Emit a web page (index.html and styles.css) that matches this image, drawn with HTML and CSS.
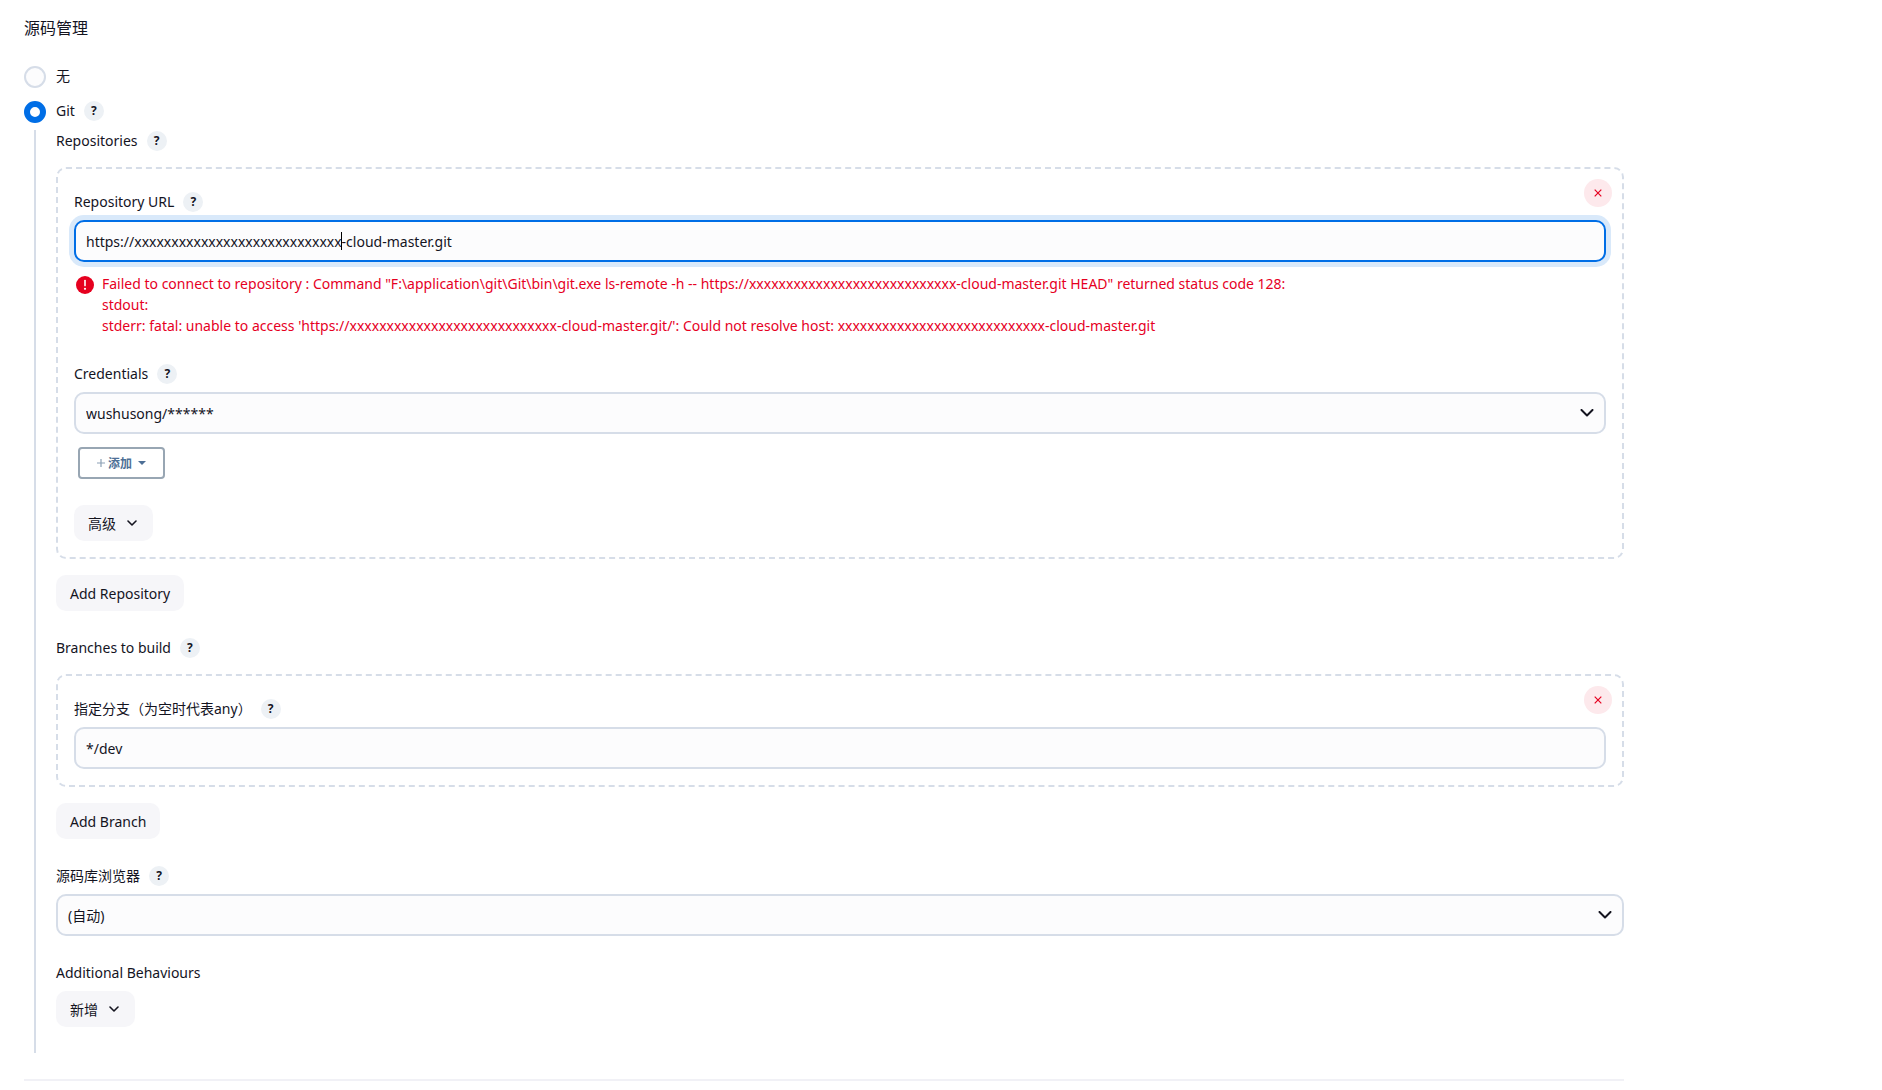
FILE: index.html
```
<!DOCTYPE html>
<html lang="zh-CN">
<head>
  <meta charset="UTF-8">
  <meta name="viewport" content="width=device-width, initial-scale=1.0">
  <title>源码管理</title>
  <link rel="stylesheet" href="styles.css">
</head>
<body>
  <form class="container">
    <h2 class="section-title">源码管理</h2>

    <div class="radio-row">
      <input type="radio" class="radio" id="scmNone" name="scm">
      <label for="scmNone">无</label>
    </div>
    <div class="radio-row">
      <input type="radio" class="radio" id="scmGit" name="scm" checked>
      <label for="scmGit">Git</label>
      <button type="button" class="help">?</button>
    </div>

    <div class="nested">
      <div class="label-row wide">
        <span>Repositories</span>
        <button type="button" class="help">?</button>
      </div>
      <div class="chunk">
        <button type="button" class="delete" aria-label="Delete">
          <svg width="8" height="8" viewBox="0 0 8 8"><path d="M0.7 0.7L7.3 7.3M7.3 0.7L0.7 7.3" stroke="currentColor" stroke-width="1.2" fill="none"/></svg>
        </button>
        <div class="field">
          <div class="label-row">
            <label for="repoUrl">Repository URL</label>
            <button type="button" class="help">?</button>
          </div>
          <div class="input-wrap">
            <input type="text" class="input" id="repoUrl" value="https://xxxxxxxxxxxxxxxxxxxxxxxxxxxx-cloud-master.git" autofocus spellcheck="false">
            <span class="text-caret"></span>
          </div>
          <div class="error">
            <svg class="error-icon" width="18" height="18" viewBox="0 0 18 18"><circle cx="9" cy="9" r="9" fill="#e6001f"/><path d="M9 4.6V9.6" stroke="#fff" stroke-width="1.6" stroke-linecap="round"/><circle cx="9" cy="12.8" r="1.1" fill="#fff"/></svg>
            <div>Failed to connect to repository : Command "F:\application\git\Git\bin\git.exe ls-remote -h -- https://xxxxxxxxxxxxxxxxxxxxxxxxxxxx-cloud-master.git HEAD" returned status code 128:<br>stdout:<br>stderr: fatal: unable to access 'https://xxxxxxxxxxxxxxxxxxxxxxxxxxxx-cloud-master.git/': Could not resolve host: xxxxxxxxxxxxxxxxxxxxxxxxxxxx-cloud-master.git</div>
          </div>
        </div>
        <div class="field">
          <div class="label-row">
            <label for="credentials">Credentials</label>
            <button type="button" class="help">?</button>
          </div>
          <select class="input select" id="credentials">
            <option>wushusong/******</option>
          </select>
          <button type="button" class="add-button">
            <svg width="8" height="8" viewBox="0 0 8 8"><path d="M4 0V8M0 4H8" stroke="#8ba0b5" stroke-width="1.2"/></svg>
            添加
            <svg class="caret" width="8" height="4" viewBox="0 0 8 4"><path d="M0 0H8L4 4Z" fill="currentColor"/></svg>
          </button>
        </div>
        <button type="button" class="button">高级
          <svg class="chevron" width="10" height="6" viewBox="0 0 10 6"><path d="M1 1L5 5L9 1" stroke="currentColor" stroke-width="1.6" fill="none" stroke-linecap="round" stroke-linejoin="round"/></svg>
        </button>
      </div>
      <div class="field">
        <button type="button" class="button">Add Repository</button>
      </div>

      <div class="label-row wide">
        <span>Branches to build</span>
        <button type="button" class="help">?</button>
      </div>
      <div class="chunk">
        <button type="button" class="delete" aria-label="Delete">
          <svg width="8" height="8" viewBox="0 0 8 8"><path d="M0.7 0.7L7.3 7.3M7.3 0.7L0.7 7.3" stroke="currentColor" stroke-width="1.2" fill="none"/></svg>
        </button>
        <div class="label-row">
          <label for="branch">指定分支（为空时代表any）</label>
          <button type="button" class="help">?</button>
        </div>
        <input type="text" class="input" id="branch" value="*/dev">
      </div>
      <div class="field">
        <button type="button" class="button">Add Branch</button>
      </div>

      <div class="field">
        <div class="label-row">
          <label for="browser">源码库浏览器</label>
          <button type="button" class="help">?</button>
        </div>
        <select class="input select" id="browser">
          <option>(自动)</option>
        </select>
      </div>

      <div class="field">
        <div class="label-row"><span>Additional Behaviours</span></div>
        <button type="button" class="button">新增
          <svg class="chevron" width="10" height="6" viewBox="0 0 10 6"><path d="M1 1L5 5L9 1" stroke="currentColor" stroke-width="1.6" fill="none" stroke-linecap="round" stroke-linejoin="round"/></svg>
        </button>
      </div>
    </div>
    <hr class="divider">
  </form>

  <script>
    window.onload = function() {
      document.getElementById('repoUrl').focus();
    };
  </script>
</body>
</html>
```

FILE: styles.css
```
* {
  box-sizing: border-box;
}
body {
  margin: 0;
  background: #fff;
  color: #14141f;
  font-family: "Segoe UI", "Noto Sans", "Noto Sans CJK SC", sans-serif;
  font-size: 14px;
  line-height: 21px;
}
button,
input,
select {
  font: inherit;
  color: inherit;
  margin: 0;
}
button {
  border: none;
  cursor: pointer;
}
.container {
  max-width: 1648px;
  padding: 16px 24px;
}
.section-title {
  margin: 0 0 26px;
  font-size: 16px;
  line-height: 24px;
  font-weight: 400;
}
.radio-row {
  display: flex;
  height: 22px;
  margin-bottom: 13px;
  line-height: 20px;
}
.radio {
  appearance: none;
  width: 22px;
  height: 22px;
  margin-right: 10px;
  border: 2px solid #d6dde8;
  border-radius: 50%;
  background: #fcfcfd;
}
.radio:checked {
  border: 6px solid #006ee6;
  background: #fff;
}
.help {
  display: flex;
  align-items: center;
  justify-content: center;
  width: 20px;
  height: 20px;
  margin-left: 9px;
  padding: 0;
  border-radius: 50%;
  background: #edf1f5;
  font-size: 12px;
  font-weight: 700;
  line-height: 20px;
}
.nested {
  display: flow-root;
  margin: -6px 0 26px 10px;
  padding-left: 20px;
  border-left: 2px solid #d6dde8;
}
.label-row {
  display: flex;
  align-items: center;
  height: 21px;
  margin-bottom: 8px;
}
.label-row.wide {
  margin-bottom: 16px;
}
.field {
  margin-bottom: 26px;
}
.chunk {
  position: relative;
  margin-bottom: 16px;
  padding: 22px 16px 16px;
  border: 2px dashed #d6dde8;
  border-radius: 10px;
}
.delete {
  position: absolute;
  top: 10px;
  right: 10px;
  display: flex;
  align-items: center;
  justify-content: center;
  width: 28px;
  height: 28px;
  padding: 0;
  border-radius: 50%;
  background: #fde9ec;
  color: #e6001f;
}
.input {
  display: block;
  width: 100%;
  height: 42px;
  padding: 0 10px;
  border: 2px solid #d6dde8;
  border-radius: 10px;
  background-color: #fcfcfd;
}
.input:focus {
  outline: none;
  border-color: #006ee6;
  box-shadow: 0 0 0 5px #d9e9fa;
  caret-color: transparent;
}
.input-wrap {
  position: relative;
}
.text-caret {
  position: absolute;
  top: 12px;
  left: 267px;
  width: 1px;
  height: 18px;
  background: #000;
}
.select {
  appearance: none;
  background-image: url("data:image/svg+xml,%3Csvg xmlns='http://www.w3.org/2000/svg' width='14' height='8' viewBox='0 0 14 8'%3E%3Cpath d='M1.5 1L7 6.5L12.5 1' fill='none' stroke='%2314141f' stroke-width='2' stroke-linecap='round' stroke-linejoin='round'/%3E%3C/svg%3E");
  background-repeat: no-repeat;
  background-position: right 10px center;
}
.error {
  display: flex;
  margin: 11px 0 27px;
  padding-left: 2px;
  color: #e6001f;
}
.error-icon {
  flex: none;
  margin: 3px 8px 0 0;
}
.button {
  display: inline-flex;
  align-items: center;
  height: 36px;
  padding: 0 14px;
  border-radius: 10px;
  background: #f6f6f9;
  vertical-align: top;
}
.chevron {
  margin: 0 2px 0 11px;
}
.add-button {
  display: flex;
  align-items: center;
  justify-content: center;
  gap: 3px;
  width: 87px;
  height: 32px;
  margin: 13px 4px 0;
  padding: 0;
  border: 2px solid #98a6b3;
  border-radius: 4px;
  background: #fff;
  color: #4d6f96;
  font-size: 12px;
  font-weight: 700;
}
.caret {
  margin-left: 3px;
}
.divider {
  margin: 0;
  border: none;
  border-top: 2px solid #f1f1f6;
}
```
